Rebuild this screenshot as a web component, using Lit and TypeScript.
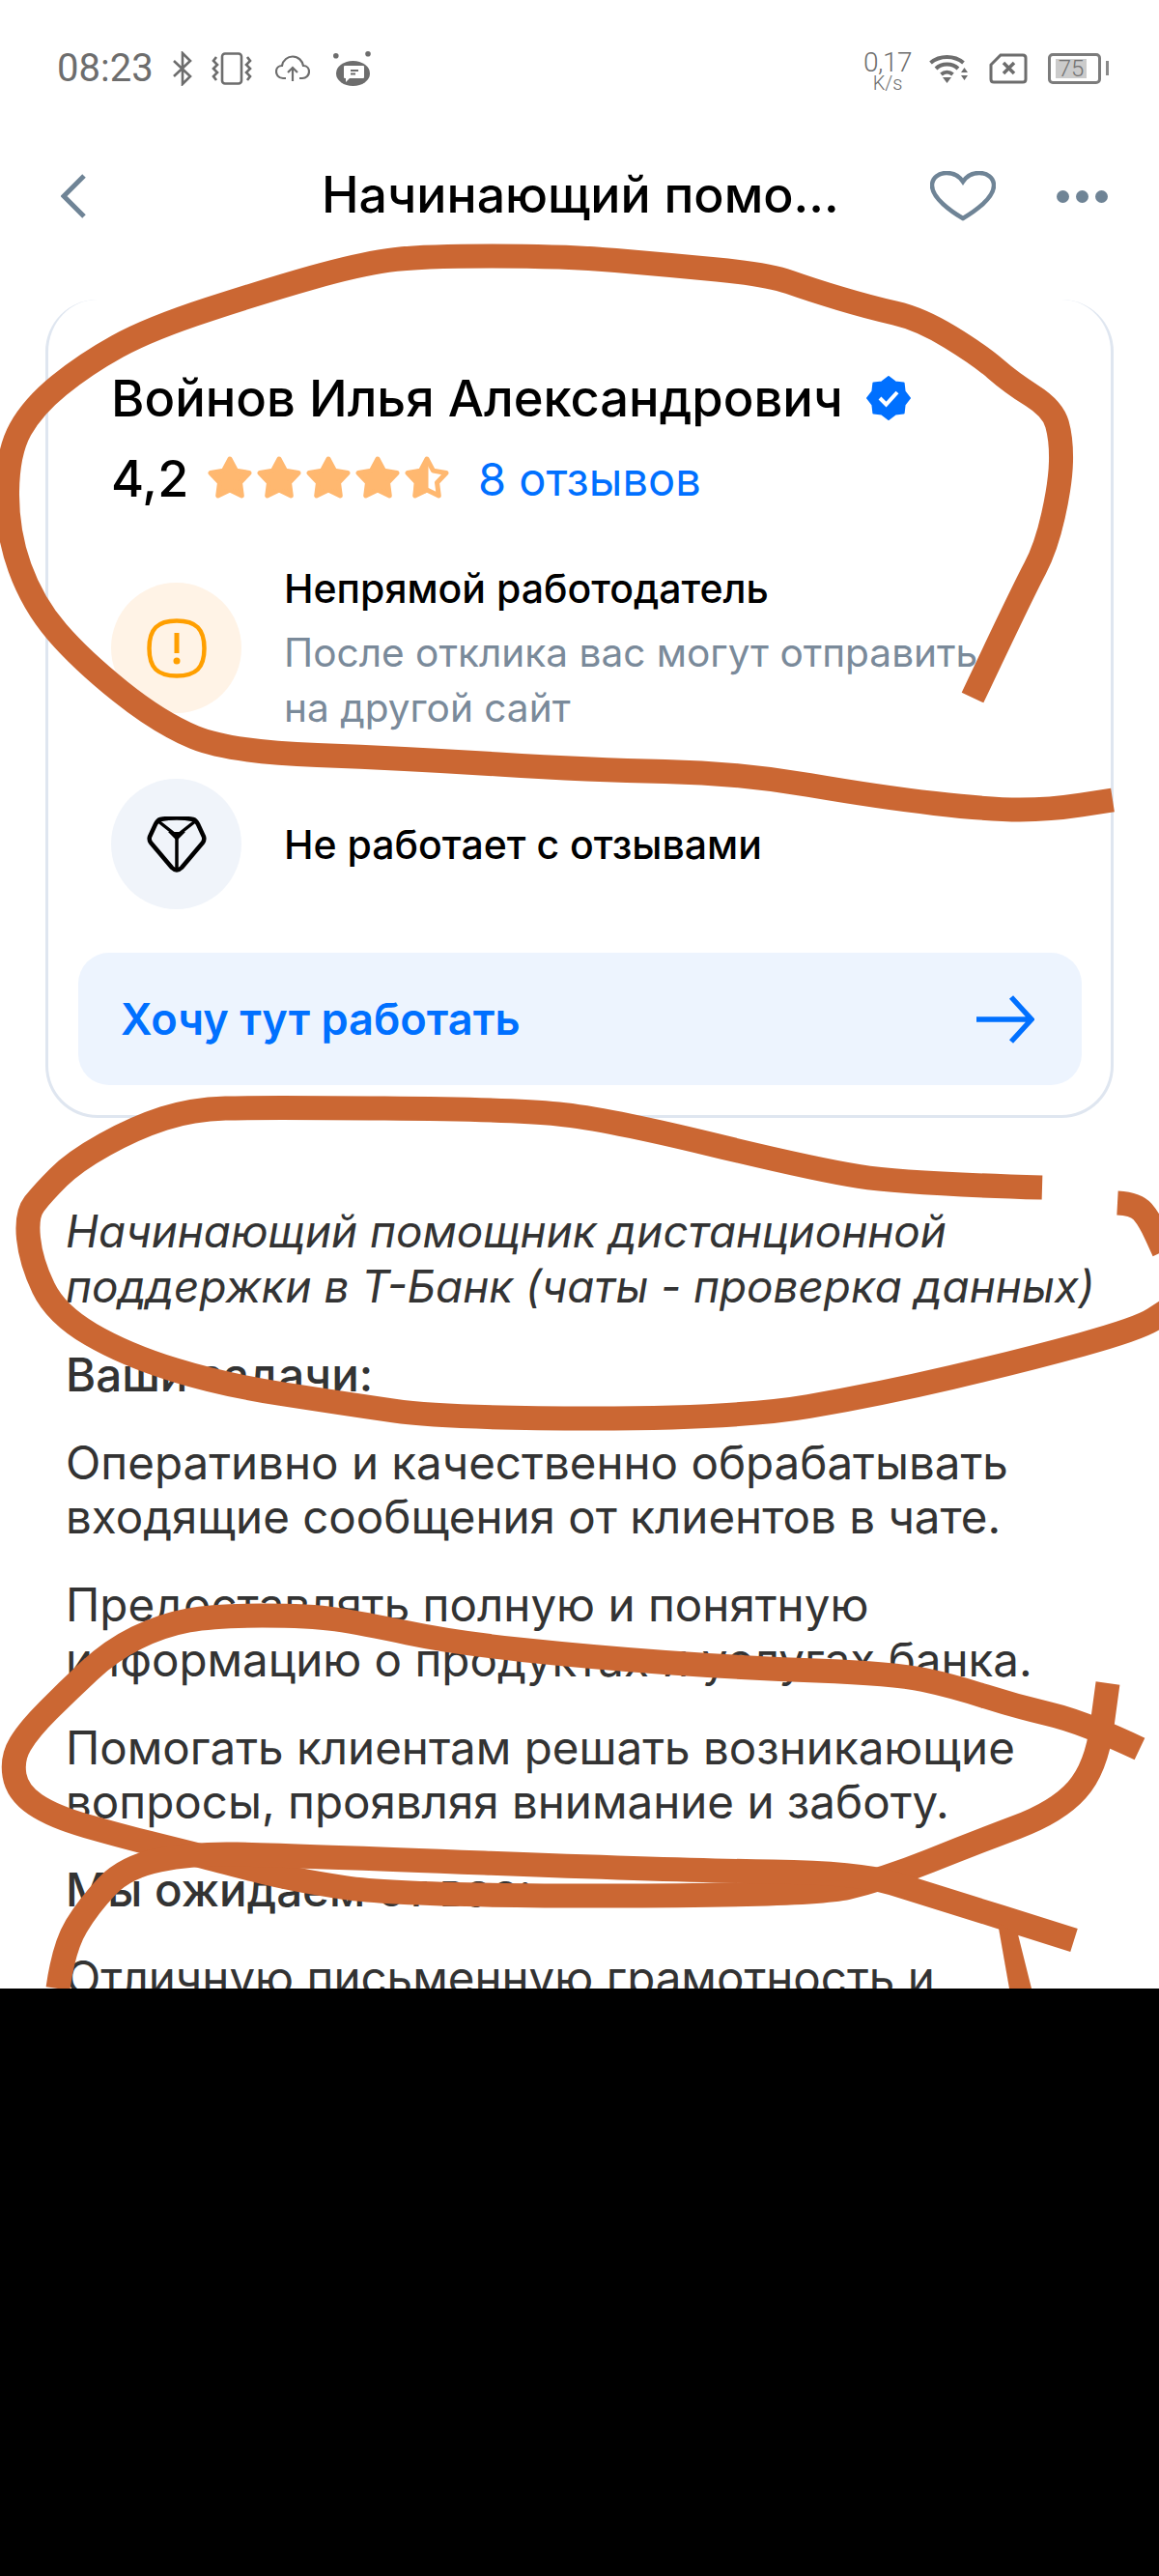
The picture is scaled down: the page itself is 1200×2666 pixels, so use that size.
import { html, svg, css, LitElement } from 'lit';
import { customElement } from 'lit/decorators.js';

// marker strokes that were drawn over the screenshot, in page pixels
const MARKS = [
  '1007,722 1060,610 1083,567 1098,500 1099,455 1090,423 1047,396 1015,368 953,330 900,318 840,300 795,284 690,274 585,265 433,265 370,274 278,300 155,340 88,377 34,421 8,468 7,550 34,625 84,683 165,748 237,778 420,785 612,797 765,800 911,825 1025,838 1087,838 1152,828',
  '1079,1229 937,1225 842,1210 628,1158 528,1148 268,1146 199,1148 140,1167 77,1202 44,1235 27,1257 32,1306 58,1360 130,1402 230,1433 352,1452 463,1468 765,1468 910,1443 1060,1408 1180,1375 1210,1355',
  '1157,1245 1176,1246 1190,1262 1205,1295',
  '1180,1810 1121,1782 1052,1766 987,1745 926,1732 765,1726 612,1715 470,1700 375,1680 321,1672 222,1672 168,1682 115,1708 70,1750 30,1790 12,1820 18,1855 55,1880 125,1900 185,1915 225,1925 300,1945 413,1962 840,1962 915,1945 1010,1907 1095,1875 1135,1830 1147,1742',
  '60,2058 66,2015 92,1972 130,1932 200,1918 291,1920 712,1936 888,1938 960,1960 1112,2008',
];

// rounds the corners of a marker stroke: each point becomes a curve control,
// the curve passes through the midpoints between them
const smooth = (points: string) => {
  const p = points.split(' ').map((s) => s.split(',').map(Number));
  let d = `M${p[0][0]} ${p[0][1]}`;
  for (let i = 1; i < p.length - 1; i++) {
    const mx = (p[i][0] + p[i + 1][0]) / 2;
    const my = (p[i][1] + p[i + 1][1]) / 2;
    d += ` Q${p[i][0]} ${p[i][1]} ${mx} ${my}`;
  }
  const last = p[p.length - 1];
  return `${d} L${last[0]} ${last[1]}`;
};

const starPoints = (cx: number, cy: number, outer: number, inner: number, n: number) => {
  const pts: string[] = [];
  for (let i = 0; i < n * 2; i++) {
    const r = i % 2 ? inner : outer;
    const a = (Math.PI * i) / n - Math.PI / 2;
    pts.push(`${(cx + r * Math.cos(a)).toFixed(1)},${(cy + r * Math.sin(a)).toFixed(1)}`);
  }
  return pts.join(' ');
};

const STAR = starPoints(23, 24, 21, 11, 5);

@customElement('app-root')
export class AppRoot extends LitElement {
  static styles = css`
    :host {
      display: flex;
      flex-direction: column;
      position: relative;
      width: 1200px;
      height: 2666px;
      overflow: hidden;
      background: #fff;
      font-family: 'Inter', 'Liberation Sans', sans-serif;
      color: #000;
    }

    /* status bar */
    .status {
      display: flex;
      align-items: center;
      height: 70px;
      margin-top: 36px;
      padding: 0 49px 0 59px;
      font-family: 'Roboto', sans-serif;
      color: #6d6d6d;
    }
    .time { font-size: 40px; line-height: 44px; margin-right: 20px; }
    .status svg { display: block; flex: none; }
    .left-icons { display: flex; align-items: center; gap: 20px; }
    .left-icons .cloud { margin-left: 4px; }
    .left-icons .bot { margin-left: 4px; }
    .spacer { flex: 1; }
    .speed {
      display: flex;
      flex-direction: column;
      align-items: center;
      width: 48px;
      margin-right: 19px;
      margin-top: 5px;
      font-weight: 300;
    }
    .speed b { font-weight: 300; font-size: 28px; line-height: 25px; letter-spacing: -.5px; }
    .speed span { font-size: 20px; line-height: 18px; }
    .right-icons { display: flex; align-items: center; gap: 21px; }
    .battery {
      position: relative;
      display: flex;
      align-items: center;
      width: 55px;
      height: 32px;
      padding: 0 5px;
      box-sizing: border-box;
      border: 3px solid #7c7c7c;
      border-radius: 5px;
      margin-right: 11px;
    }
    .battery i {
      display: block;
      width: 32px;
      height: 20px;
      line-height: 20px;
      background: #cbcbcb;
      color: #727272;
      font-style: normal;
      font-size: 24px;
      font-weight: 300;
      text-align: center;
    }
    .battery::after {
      content: '';
      position: absolute;
      right: -11px;
      top: 5px;
      width: 3px;
      height: 15px;
      background: #8a8a8a;
    }

    /* header */
    .topbar {
      display: flex;
      align-items: center;
      height: 62px;
      margin-top: 66px;
      padding: 0 53px 0 63px;
    }
    .topbar h1 {
      flex: 1;
      margin: -4px 0 0;
      padding-left: 244px;
      font-size: 51.8px;
      line-height: 62px;
      font-weight: 500;
      white-space: nowrap;
    }
    .dots { display: flex; gap: 7px; margin-left: 63px; }
    .dots i { display: block; width: 13px; height: 13px; border-radius: 50%; background: #6f8496; }

    /* card */
    main {
      height: 2058px;
      overflow: hidden;
      flex: none;
    }
    .card {
      box-sizing: border-box;
      height: 847px;
      margin: 76px 47px 0;
      padding: 70px 30px 32px 31px;
      border: 3px solid #dfe6f0;
      border-top: 0;
      border-radius: 54px;
    }
    .name {
      display: flex;
      align-items: center;
      gap: 24px;
      height: 64px;
      padding-left: 34px;
      font-size: 52.5px;
      font-weight: 500;
      white-space: nowrap;
    }
    .rating {
      display: flex;
      align-items: center;
      height: 64px;
      margin-top: 19px;
      padding-left: 34px;
    }
    .score { font-size: 52px; font-weight: 500; width: 100px; }
    .stars { display: flex; gap: 5px; width: 280px; }
    .reviews { font-size: 47px; color: #0070ff; white-space: nowrap; }
    .fact {
      display: flex;
      gap: 44px;
      padding-left: 34px;
      align-items: center;
    }
    .fact.first { margin-top: 76px; }
    .fact.second { margin-top: 68px; }
    .circle {
      display: flex;
      align-items: center;
      justify-content: center;
      flex: none;
      width: 135px;
      height: 135px;
      border-radius: 50%;
    }
    .circle.warn { background: #fff3e6; }
    .circle.mute { background: #f0f4fa; }
    .fact-title { font-size: 41px; line-height: 56px; font-weight: 500; white-space: nowrap; }
    .fact-text { font-size: 40.6px; line-height: 57px; color: #7a8a9a; margin-top: 10px; white-space: nowrap; }
    .fact.first .body { margin-top: -56px; margin-bottom: -56px; }
    .want {
      display: flex;
      align-items: center;
      justify-content: space-between;
      height: 137px;
      margin-top: 45px;
      padding: 0 49px 0 44px;
      border-radius: 32px;
      background: #edf4fe;
      color: #0070ff;
      font-size: 45.2px;
      font-weight: 600;
    }

    /* description */
    .desc {
      padding: 0 24px 0 68px;
      color: #333;
      font-size: 47.5px;
      line-height: 56.5px;
    }
    .desc p { margin: 34.5px 0 0; white-space: nowrap; }
    .desc p.lead { margin-top: 90px; font-size: 45.8px; font-style: italic; }
    .desc h3 { margin: 34.5px 0 0; font: inherit; font-weight: 500; }

    .blackout { flex: 1; background: #000; position: relative; z-index: 2; }

    /* free-hand marks over the page */
    .marks {
      position: absolute;
      left: 0;
      top: 0;
      width: 1200px;
      height: 2666px;
      z-index: 1;
      pointer-events: none;
    }
    .marks path { fill: none; stroke: #cb6733; stroke-width: 25; stroke-linejoin: round; }
    .marks polygon { fill: #cb6733; }
  `;

  private star(half = false) {
    if (!half) {
      return html`<svg width="46" height="46" viewBox="0 0 46 46">
        <polygon points=${STAR} fill="#ffb870" stroke="#ffb870" stroke-width="5" stroke-linejoin="round"></polygon>
      </svg>`;
    }
    return html`<svg width="46" height="46" viewBox="0 0 46 46">
      <polygon points=${STAR} fill="none" stroke="#ffb870" stroke-width="5" stroke-linejoin="round"></polygon>
      <path d="M23 3 L23 36 L10.6 41 L11.2 27 L3 17.5 L17 14.5 Z" fill="#ffb870" stroke="#ffb870" stroke-width="3" stroke-linejoin="round"></path>
    </svg>`;
  }

  private statusLeft() {
    return html`<div class="left-icons">
      <svg width="20" height="36" viewBox="0 0 20 36" fill="none" stroke="#6d6d6d" stroke-width="2.6">
        <path d="M1 10 L18 26 L10 34 V2 L18 10 L1 26"></path>
      </svg>
      <svg width="42" height="34" viewBox="0 0 42 34" fill="none" stroke="#6d6d6d" stroke-width="2.6">
        <rect x="11" y="1.5" width="20" height="31" rx="3"></rect>
        <path d="M5 5 L2 9 L6 13 L2 17 L6 21 L2 25 L5 29 M37 5 L40 9 L36 13 L40 17 L36 21 L40 25 L37 29"></path>
      </svg>
      <svg class="cloud" width="36" height="28" viewBox="0 0 36 28" fill="none" stroke="#6d6d6d" stroke-width="2.2">
        <path d="M11 24 H8 C3 24 1 20 1 17 C1 13 4 11 7 11 C8 5 13 1.500 18 1.500 C24 1.500 28 6 29 11 C33 11 35 14 35 17 C35 21 32 24 28 24 H25"></path>
        <path d="M18 27 V13 M13 18 L18 13 L23 18"></path>
      </svg>
      <svg class="bot" width="40" height="36" viewBox="0 0 40 36">
        <ellipse cx="20.500" cy="23" rx="17.500" ry="13" fill="#6d6d6d"></ellipse>
        <circle cx="2.800" cy="4.700" r="2.800" fill="#6d6d6d"></circle>
        <circle cx="36" cy="2.800" r="2.800" fill="#6d6d6d"></circle>
        <path d="M12 15 H31 Q32 15 32 16 V27 Q32 28 31 28 H17 L13 32 V28 H12 Q11 28 11 27 V16 Q11 15 12 15 Z" fill="#fff"></path>
        <path d="M18 20 H26 M18 23.500 H23" stroke="#6d6d6d" stroke-width="1.800"></path>
      </svg>
    </div>`;
  }

  private statusRight() {
    return html`<div class="right-icons">
      <svg width="41" height="30" viewBox="0 0 41 30" fill="none" stroke="#6d6d6d" stroke-width="4">
        <path d="M1.500 9 C11 1 26 1 35.500 9"></path>
        <path d="M7 15 C13 9 24 9 30 15"></path>
        <path d="M12.500 21 C16 18 21 18 24.500 21"></path>
        <path d="M14 24 H23 L18.500 30 Z" fill="#6d6d6d" stroke="none"></path>
        <path d="M33 19 L36.500 14 L40 19 Z M33 22 H40 L36.500 27 Z" fill="#6d6d6d" stroke="none"></path>
      </svg>
      <svg width="40" height="32" viewBox="0 0 40 32" fill="none" stroke="#6d6d6d" stroke-width="3">
        <path d="M12 2 H35 Q38 2 38 5 V27 Q38 30 35 30 H5 Q2 30 2 27 V12 Z"></path>
        <path d="M15 10 L26 21 M26 10 L15 21" stroke-width="3.500"></path>
      </svg>
      <div class="battery"><i>75</i></div>
    </div>`;
  }

  render() {
    return html`
      <main>
        <div class="status">
          <span class="time">08:23</span>
          ${this.statusLeft()}
          <span class="spacer"></span>
          <div class="speed"><b>0,17</b><span>K/s</span></div>
          ${this.statusRight()}
        </div>

        <div class="topbar">
          <svg width="26" height="46" viewBox="0 0 26 46" fill="none" stroke="#6f8496" stroke-width="5">
            <path d="M24 2 L3 23 L24 44"></path>
          </svg>
          <h1>Начинающий помо...</h1>
          <svg width="68" height="52" viewBox="0 0 68 52" fill="none" stroke="#6f8496" stroke-width="4.500">
            <path d="M34 49 C22 42 2 28 2 15 C2 7 9 2 17 2 C24 2 30 5 34 11 C38 5 44 2 51 2 C59 2 66 7 66 15 C66 28 46 42 34 49 Z"></path>
          </svg>
          <div class="dots"><i></i><i></i><i></i></div>
        </div>

        <section class="card">
          <div class="name">
            <span>Войнов Илья Александрович</span>
            <svg width="46" height="46" viewBox="0 0 46 46">
              <polygon points=${starPoints(23, 23, 22, 18, 8)} fill="#0070ff" stroke="#0070ff" stroke-width="2" stroke-linejoin="round"></polygon>
              <path d="M14 23 L20.500 29.500 L32 17" fill="none" stroke="#fff" stroke-width="4"></path>
            </svg>
          </div>
          <div class="rating">
            <span class="score">4,2</span>
            <div class="stars">
              ${this.star()}${this.star()}${this.star()}${this.star()}${this.star(true)}
            </div>
            <span class="reviews">8 отзывов</span>
          </div>

          <div class="fact first">
            <div class="circle warn">
              <svg width="62" height="62" viewBox="0 0 62 62" fill="none" stroke="#ff9f00" stroke-width="4.500">
                <path d="M31 2.500 C51 2.500 59.500 11 59.500 31 C59.500 51 51 59.500 31 59.500 C11 59.500 2.500 51 2.500 31 C2.500 11 11 2.500 31 2.500 Z"></path>
                <path d="M31 15 V36" stroke-width="5"></path>
                <circle cx="31" cy="44" r="3.500" fill="#ff9f00" stroke="none"></circle>
              </svg>
            </div>
            <div class="body">
              <div class="fact-title">Непрямой работодатель</div>
              <div class="fact-text">После отклика вас могут отправить<br />на другой сайт</div>
            </div>
          </div>

          <div class="fact second">
            <div class="circle mute">
              <svg width="62" height="58" viewBox="0 0 62 58" fill="none" stroke="#000" stroke-width="4.500" stroke-linejoin="round">
                <path d="M14 3 Q31 0 48 3 Q51 4 53 8 L59 21 Q60 24 58 27 L36 53 Q31 58 26 53 L4 27 Q2 24 3 21 L9 8 Q11 4 14 3 Z"></path>
                <path d="M12 5 L31 20 L50 5 M31 20 V54" stroke-width="3.500"></path>
                <path d="M22 16 H40 L31 25 Z" fill="#000" stroke="none"></path>
              </svg>
            </div>
            <div class="fact-title">Не работает с отзывами</div>
          </div>

          <div class="want">
            <span>Хочу тут работать</span>
            <svg width="60" height="50" viewBox="0 0 60 50" fill="none" stroke="#0070ff" stroke-width="5.500">
              <path d="M0 25 H56 M36 2 L57 25 L36 48"></path>
            </svg>
          </div>
        </section>

        <article class="desc">
          <p class="lead">Начинающий помощник дистанционной<br />поддержки в Т-Банк (чаты - проверка данных)</p>
          <h3>Ваши задачи:</h3>
          <p>Оперативно и качественно обрабатывать<br />входящие сообщения от клиентов в чате.</p>
          <p>Предоставлять полную и понятную<br />информацию о продуктах и услугах банка.</p>
          <p>Помогать клиентам решать возникающие<br />вопросы, проявляя внимание и заботу.</p>
          <h3>Мы ожидаем от вас:</h3>
          <p>Отличную письменную грамотность и</p>
        </article>
      </main>

      <div class="blackout"></div>

      <svg class="marks" viewBox="0 0 1200 2666">
        ${MARKS.map((p) => svg`<path d=${smooth(p)}></path>`)}
        <polygon points="1033,1990 1054,2002 1068,2058 1045,2058"></polygon>
      </svg>
    `;
  }
}
